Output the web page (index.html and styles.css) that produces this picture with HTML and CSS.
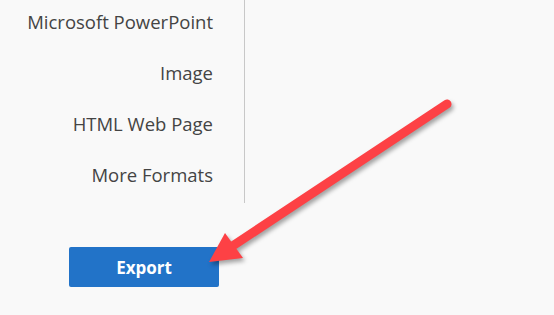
FILE: index.html
```html
<!DOCTYPE html>
<html lang="en">
<head>
    <meta charset="UTF-8">
    <title>Export</title>
    <link rel="stylesheet" href="styles.css">
</head>
<body>
    <div class="panel">
        <ul class="formats">
            <li>Microsoft PowerPoint</li>
            <li>Image</li>
            <li>HTML Web Page</li>
            <li>More Formats</li>
        </ul>
    </div>

    <div class="actions">
        <button class="export-btn">Export</button>
    </div>

    <!-- annotation arrow -->
    <svg class="arrow" width="554" height="315" viewBox="0 0 554 315">
        <line x1="447" y1="104" x2="222" y2="253" stroke="#fd4145" stroke-width="9" stroke-linecap="round"/>
        <polygon points="209,262 225,233 243,258" fill="#fd4145"/>
    </svg>
</body>
</html>
```

FILE: styles.css
```css
* {
    margin: 0;
    padding: 0;
    box-sizing: border-box;
}

body {
    width: 554px;
    height: 315px;
    overflow: hidden;
    background: #f9f9f9;
    font-family: 'Open Sans', 'Noto Sans', sans-serif;
    position: relative;
}

/* format list */
.panel {
    display: flow-root;
    width: 245px;
    height: 203px;
    border-right: 1px solid #c8c8c8;
    padding-right: 31px;
}

.formats {
    list-style: none;
    margin-top: -4px;
}

.formats li {
    height: 51px;
    line-height: 51px;
    text-align: right;
    font-size: 18.5px;
    color: #444;
}

/* export button */
.actions {
    padding: 44px 0 0 69px;
}

.export-btn {
    width: 150px;
    height: 40px;
    border: none;
    border-radius: 2px;
    background: #2273c8;
    color: #fff;
    font-family: 'Open Sans', sans-serif;
    font-size: 17px;
    font-weight: 700;
}

.arrow {
    position: absolute;
    top: 0;
    left: 0;
    filter: drop-shadow(2px 3px 2px rgba(0, 0, 0, 0.35));
}
```
